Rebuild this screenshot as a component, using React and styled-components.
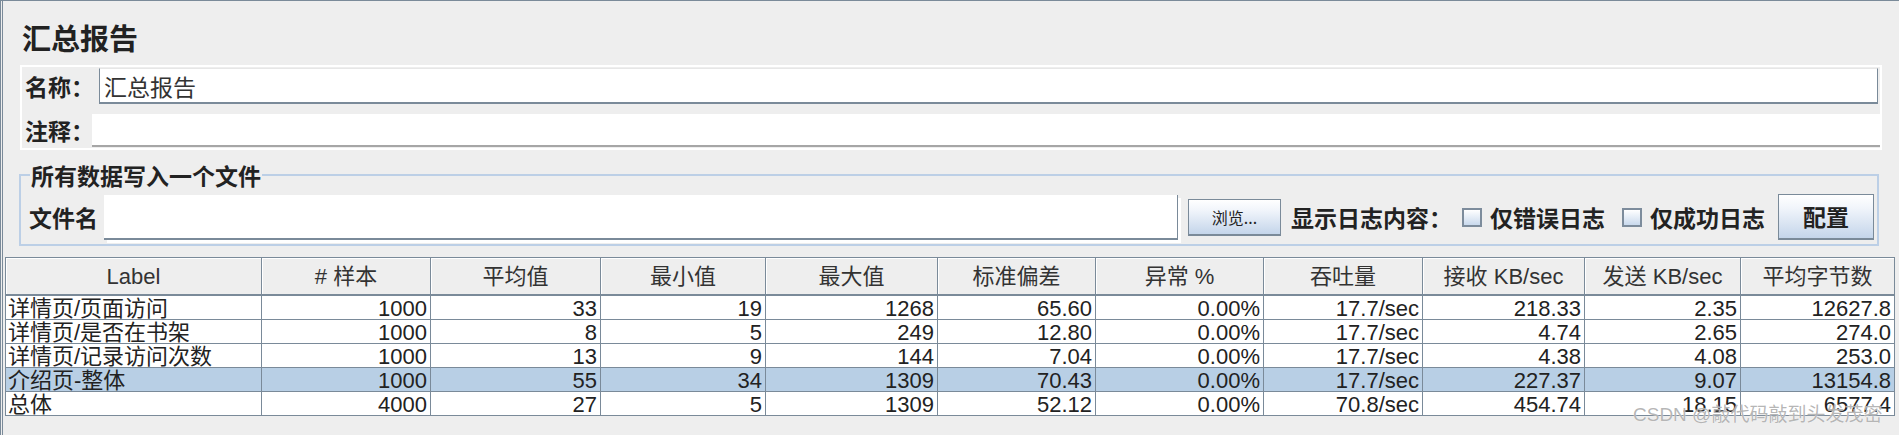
import React from "react";
import styled, { createGlobalStyle } from "styled-components";

const GRID = "#7a8a99";
const COLS = [256, 169, 170, 165, 172, 158, 168, 159, 162, 156, 154];

const GlobalStyle = createGlobalStyle`
  html, body { margin: 0; padding: 0; background: #eeeeee; }
  body { font-family: "Noto Sans CJK SC", "Liberation Sans", sans-serif; color: #222; }
  *, *::before, *::after { box-sizing: border-box; }
`;

const Frame = styled.div`
  position: relative;
  width: 1899px;
  height: 435px;
  background: #eeeeee;
  border-top: 1px solid ${GRID};
  border-left: 3px double ${GRID};
  overflow: hidden;
  display: flex;
  flex-direction: column;
`;

const Top = styled.div`
  display: flex;
  flex-direction: column;
  align-items: flex-start;
  padding-left: 16px;
`;

const Title = styled.h1`
  margin: 22px 0 0 3px;
  height: 28px;
  font-size: 29px;
  line-height: 28px;
  font-weight: 700;
  color: #222;
`;

const NamePanel = styled.div`
  margin: 14px 0 0 1px;
  width: 1862px;
  height: 85px;
  border: 2px solid #ffffff;
  padding: 1px 0;
  display: flex;
  flex-direction: column;
  gap: 10px;
`;

const FieldRow = styled.div`
  display: flex;
  align-items: center;
  height: ${(p) => p.$h}px;
`;

const RowLabel = styled.span`
  flex: none;
  width: ${(p) => p.$w}px;
  padding-left: ${(p) => p.$pl ?? 3}px;
  margin-left: ${(p) => p.$ml ?? 0}px;
  font-size: 23px;
  line-height: 1;
  font-weight: 700;
  color: #222;
  white-space: nowrap;
`;

const TextField = styled.div`
  flex: 1;
  align-self: stretch;
  display: flex;
  align-items: center;
  padding-left: 4px;
  background: #ffffff;
  font-size: 23px;
  font-weight: 400;
  color: #333;
  ${(p) =>
    p.$variant === "name" &&
    `
    margin-right: 2px;
    border-top: 1px solid #e6e6e6;
    border-left: 1px solid ${GRID};
    border-right: 1px solid ${GRID};
    border-bottom: 2px solid ${GRID};
  `}
  ${(p) =>
    p.$variant === "comment" &&
    `
    border-bottom: 2px solid #a6a6a6;
  `}
`;

const Group = styled.fieldset`
  margin: 13px 0 0 0;
  width: 1860px;
  min-width: 0;
  padding: 7px 3px 4px 0;
  border: 2px solid #bccfe6;
`;

const GroupTitle = styled.legend`
  margin-left: 9px;
  padding: 0 1px;
  font-size: 23px;
  line-height: 24px;
  font-weight: 700;
  color: #222;
`;

const FileRow = styled.div`
  display: flex;
  align-items: center;
  height: 46px;
`;

const FileField = styled.div`
  flex: none;
  width: 1074px;
  height: 45px;
  background: #ffffff;
  border-right: 1px solid ${GRID};
  border-bottom: 2px solid ${GRID};
  box-shadow: 3px 3px 0 0 #ffffff;
`;

const Button = styled.button`
  flex: none;
  width: ${(p) => p.$w}px;
  height: ${(p) => p.$h}px;
  margin-left: ${(p) => p.$ml}px;
  padding: 0;
  border: 1px solid ${GRID};
  border-bottom-width: 2px;
  background: linear-gradient(#ffffff 0%, #f1f5fb 30%, #c4d5ea 100%);
  font-family: "Noto Sans CJK SC", "Liberation Sans", sans-serif;
  font-size: ${(p) => p.$fs}px;
  font-weight: ${(p) => p.$fw};
  color: #222;
  line-height: 1;
`;

const Text = styled.span`
  flex: none;
  margin-left: ${(p) => p.$ml}px;
  font-size: 23px;
  line-height: 1;
  font-weight: 700;
  color: #222;
  white-space: nowrap;
`;

const CheckBox = styled.span`
  flex: none;
  display: inline-block;
  width: 20px;
  height: 19px;
  margin-left: ${(p) => p.$ml}px;
  border: 2px solid #7d8c9c;
  background: linear-gradient(#ffffff, #c9d9ed);
`;

const Table = styled.div`
  margin: 11px 0 0 2px;
  width: 1890px;
  border-left: 1px solid ${GRID};
  border-top: 1px solid ${GRID};
  font-family: "Liberation Sans", "Noto Sans CJK SC", sans-serif;
  font-size: 22px;
  color: #222;
`;

const Row = styled.div`
  display: grid;
  grid-template-columns: ${COLS.map((c) => `${c}px`).join(" ")};
  height: 24px;
  background: ${(p) => (p.$selected ? "#b8cfe5" : "#ffffff")};
`;

const HeaderRow = styled(Row)`
  height: 38px;
  background: #eeeeee;
`;

const Cell = styled.div`
  border-right: 1px solid ${GRID};
  border-bottom: 1px solid ${GRID};
  padding: 0 3px 0 2px;
  text-align: ${(p) => p.$align};
  line-height: 25px;
  white-space: nowrap;
  overflow: hidden;
`;

const HeadCell = styled.div`
  border-right: 1px solid ${GRID};
  border-bottom: 2px solid ${GRID};
  box-shadow: inset 1px 1px 0 #ffffff;
  text-align: center;
  line-height: 37px;
  color: #333;
  white-space: nowrap;
  overflow: hidden;
`;

const Watermark = styled.div`
  position: absolute;
  left: 1630px;
  top: 404px;
  font-family: "Liberation Sans", "Noto Sans CJK SC", sans-serif;
  font-size: 19px;
  line-height: 20px;
  color: rgba(150, 150, 150, 0.7);
  text-shadow: 0 0 1px #ffffff;
  white-space: nowrap;
  pointer-events: none;
`;

const HEADERS = [
  "Label",
  "# 样本",
  "平均值",
  "最小值",
  "最大值",
  "标准偏差",
  "异常 %",
  "吞吐量",
  "接收 KB/sec",
  "发送 KB/sec",
  "平均字节数",
];

const ROWS = [
  ["详情页/页面访问", "1000", "33", "19", "1268", "65.60", "0.00%", "17.7/sec", "218.33", "2.35", "12627.8"],
  ["详情页/是否在书架", "1000", "8", "5", "249", "12.80", "0.00%", "17.7/sec", "4.74", "2.65", "274.0"],
  ["详情页/记录访问次数", "1000", "13", "9", "144", "7.04", "0.00%", "17.7/sec", "4.38", "4.08", "253.0"],
  ["介绍页-整体", "1000", "55", "34", "1309", "70.43", "0.00%", "17.7/sec", "227.37", "9.07", "13154.8"],
  ["总体", "4000", "27", "5", "1309", "52.12", "0.00%", "70.8/sec", "454.74", "18.15", "6577.4"],
];

const SELECTED = 3;

export default function App() {
  return (
    <>
      <GlobalStyle />
      <Frame>
        <Top>
          <Title>汇总报告</Title>
          <NamePanel>
            <FieldRow $h={36}>
              <RowLabel $w={77}>名称：</RowLabel>
              <TextField $variant="name">汇总报告</TextField>
            </FieldRow>
            <FieldRow $h={33}>
              <RowLabel $w={70}>注释：</RowLabel>
              <TextField $variant="comment" />
            </FieldRow>
          </NamePanel>
          <Group>
            <GroupTitle>所有数据写入一个文件</GroupTitle>
            <FileRow>
              <RowLabel $w={75} $pl={0} $ml={8}>文件名</RowLabel>
              <FileField />
              <Button $w={93} $h={37} $ml={10} $fs={16} $fw={400}>浏览...</Button>
              <Text $ml={10}>显示日志内容：</Text>
              <CheckBox $ml={10} />
              <Text $ml={8}>仅错误日志</Text>
              <CheckBox $ml={17} />
              <Text $ml={8}>仅成功日志</Text>
              <Button $w={96} $h={46} $ml={13} $fs={23} $fw={700}>配置</Button>
            </FileRow>
          </Group>
        </Top>
        <Table>
          <HeaderRow>
            {HEADERS.map((h) => (
              <HeadCell key={h}>{h}</HeadCell>
            ))}
          </HeaderRow>
          {ROWS.map((r, i) => (
            <Row key={r[0]} $selected={i === SELECTED}>
              {r.map((v, j) => (
                <Cell key={j} $align={j === 0 ? "left" : "right"}>
                  {v}
                </Cell>
              ))}
            </Row>
          ))}
        </Table>
        <Watermark>CSDN @敲代码敲到头发茂密</Watermark>
      </Frame>
    </>
  );
}
